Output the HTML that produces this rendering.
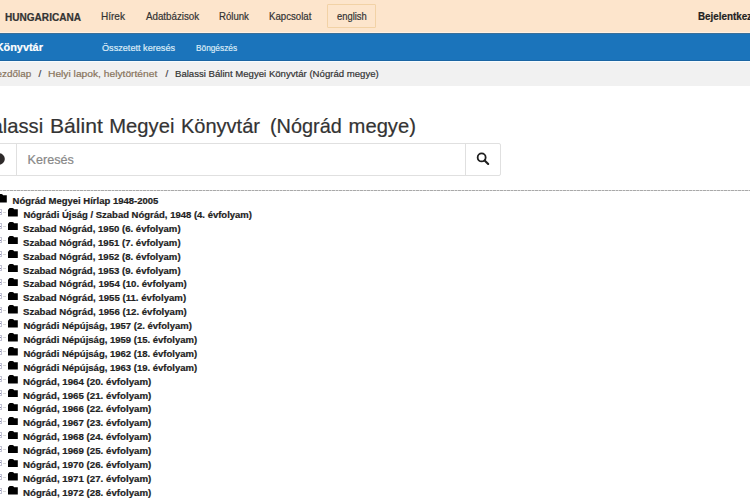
<!DOCTYPE html>
<html>
<head>
<meta charset="utf-8">
<style>
html,body{margin:0;padding:0;}
body{width:750px;height:500px;overflow:hidden;position:relative;background:#fff;font-family:"Liberation Sans",sans-serif;color:#333;}
.a{position:absolute;white-space:nowrap;line-height:1;transform-origin:0 0;-webkit-text-stroke:0.2px currentColor;}
#hdr{position:absolute;left:0;top:0;width:750px;height:33px;background:#fde5cc;}
#blue{position:absolute;left:0;top:33px;width:750px;height:28px;background:#1b74bb;}
#crumb{position:absolute;left:0;top:61px;width:750px;height:25px;background:#f1f1f1;}
#eng{position:absolute;left:327px;top:4px;width:47px;height:22px;border:1px solid #f2d2a6;border-radius:1px;}
#search{position:absolute;left:-20px;top:143px;width:519px;height:31px;border:1px solid #e0e0e0;border-radius:0 2px 2px 0;}
#addon-div{position:absolute;left:16px;top:143px;width:1px;height:33px;background:#e0e0e0;}
#btn-div{position:absolute;left:465px;top:143px;width:1px;height:33px;background:#e0e0e0;}
#dash{position:absolute;left:0;top:190px;width:750px;height:1px;background:repeating-linear-gradient(90deg,#a9a9a9 0 2.4px,#d6d6d6 2.4px 3.5px);}
.t{position:absolute;font-size:9.5px;font-weight:bold;color:#222;-webkit-text-stroke:0.2px #222;white-space:nowrap;line-height:1;transform-origin:0 0;}
.fold{position:absolute;width:10px;height:8.5px;}
.plus{position:absolute;left:-7px;width:7px;height:4px;border:1px solid #c4c4d4;}
.plus::after{content:'';position:absolute;left:1px;right:0;top:1.5px;height:1px;background:#8a8ab0;}
.dl{position:absolute;left:3.4px;width:3px;height:1px;background:#d8d8d8;}
</style>
</head>
<body>
<div id="hdr"></div>
<div id="eng"></div>

<div id="blue"></div>

<div id="crumb"></div>
<div style="position:absolute;left:0;top:32px;width:750px;height:1px;background:#fff0e2"></div>
<div style="position:absolute;left:0;top:33px;width:750px;height:1px;background:#3a6f98"></div>
<div style="position:absolute;left:0;top:60px;width:750px;height:1px;background:#1a65a3"></div>
<div style="position:absolute;left:0;top:61px;width:750px;height:1px;background:#f6fcff"></div>
<div id="search"></div>
<div id="addon-div"></div>
<div id="btn-div"></div>
<svg style="position:absolute;left:474px;top:150px" width="18" height="18" viewBox="0 0 18 18"><circle cx="7.65" cy="7.45" r="4.0" fill="none" stroke="#1e1e1e" stroke-width="1.8"/><line x1="10.6" y1="10.4" x2="14.2" y2="14" stroke="#1e1e1e" stroke-width="2.1" stroke-linecap="round"/></svg>
<svg style="position:absolute;left:-7px;top:152.5px" width="12" height="12" viewBox="0 0 12 12"><circle cx="6" cy="6" r="5.8" fill="#2e2a2a"/></svg>

<!--TEXT-->
<div class="a" style="left:5.00px;top:12.80px;font-size:10.2px;font-weight:700;color:#333;transform:scaleX(0.9870);">HUNGARICANA</div>
<div class="a" style="left:101.05px;top:10.50px;font-size:10.5px;font-weight:400;color:#333;transform:scaleX(0.9542);">Hírek</div>
<div class="a" style="left:146.00px;top:10.50px;font-size:10.5px;font-weight:400;color:#333;transform:scaleX(0.9298);">Adatbázisok</div>
<div class="a" style="left:218.68px;top:10.50px;font-size:10.5px;font-weight:400;color:#333;transform:scaleX(0.9156);">Rólunk</div>
<div class="a" style="left:268.58px;top:10.50px;font-size:10.5px;font-weight:400;color:#333;transform:scaleX(0.9178);">Kapcsolat</div>
<div class="a" style="left:336.50px;top:10.50px;font-size:10.5px;font-weight:400;color:#333;transform:scaleX(0.8939);">english</div>
<div class="a" style="left:698.00px;top:10.50px;font-size:10.5px;font-weight:700;color:#222;transform:scaleX(0.935);">Bejelentkezés</div>
<div class="a" style="left:-4.30px;top:42.40px;font-size:10.9px;font-weight:700;color:#fff;">Könyvtár</div>
<div class="a" style="left:101.70px;top:42.80px;font-size:9.4px;font-weight:400;color:#dcebf7;transform:scaleX(0.9733);">Összetett keresés</div>
<div class="a" style="left:196.20px;top:42.80px;font-size:9.4px;font-weight:400;color:#dcebf7;transform:scaleX(0.8848);">Böngészés</div>
<div class="a" style="left:-10.00px;top:68.80px;font-size:9.9px;font-weight:400;color:#87735b;">Kezdőlap</div>
<div class="a" style="left:38.50px;top:68.80px;font-size:9.9px;font-weight:400;color:#444;">/</div>
<div class="a" style="left:48.40px;top:68.80px;font-size:9.9px;font-weight:400;color:#87735b;transform:scaleX(1.0368);">Helyi lapok, helytörténet</div>
<div class="a" style="left:165.50px;top:68.80px;font-size:9.9px;font-weight:400;color:#444;">/</div>
<div class="a" style="left:175.30px;top:68.80px;font-size:9.9px;font-weight:400;color:#333;transform:scaleX(0.9718);">Balassi Bálint Megyei Könyvtár (Nógrád megye)</div>
<div class="a" style="left:27.60px;top:154.00px;font-size:12.6px;font-weight:400;color:#888;">Keresés</div>
<div class="a" style="left:-21.90px;top:115.70px;font-size:20.2px;font-weight:400;color:#333;">Balassi</div>
<div class="a" style="left:50.15px;top:115.70px;font-size:20.2px;font-weight:400;color:#333;transform:scaleX(1.0460);">Bálint</div>
<div class="a" style="left:109.30px;top:115.70px;font-size:20.2px;font-weight:400;color:#333;">Megyei</div>
<div class="a" style="left:181.41px;top:115.70px;font-size:20.2px;font-weight:400;color:#333;transform:scaleX(0.9911);">Könyvtár</div>
<div class="a" style="left:270.42px;top:115.70px;font-size:20.2px;font-weight:400;color:#333;transform:scaleX(0.9845);">(Nógrád</div>
<div class="a" style="left:348.60px;top:115.70px;font-size:20.2px;font-weight:400;color:#333;">megye)</div>
<!--/TEXT-->
<div id="dash"></div>
<!--TREE-->
<svg class="fold" style="left:-2.6px;top:194.4px" width="10" height="8.5" viewBox="0 0 10 8" preserveAspectRatio="none"><path d="M0 8V1.7Q0 1.1 0.7 1.1Q0.9 0 2.3 0H4.2Q5.5 0 6.1 1.1H9.8V8Z" fill="#000"/></svg>
<div class="t" style="left:12.6px;top:196.0px">Nógrád Megyei Hírlap 1948-2005</div>
<div class="plus" style="top:209.40px"></div><div class="dl" style="top:212.20px"></div>
<svg class="fold" style="left:8px;top:208.00px" width="10" height="8.5" viewBox="0 0 10 8" preserveAspectRatio="none"><path d="M0 8V1.7Q0 1.1 0.7 1.1Q0.9 0 2.3 0H4.2Q5.5 0 6.1 1.1H9.8V8Z" fill="#000"/></svg>
<div class="t" style="left:23.4px;top:210.00px;">Nógrádi Újság / Szabad Nógrád, 1948 (4. évfolyam)</div>
<div class="plus" style="top:223.32px"></div><div class="dl" style="top:226.12px"></div>
<svg class="fold" style="left:8px;top:221.92px" width="10" height="8.5" viewBox="0 0 10 8" preserveAspectRatio="none"><path d="M0 8V1.7Q0 1.1 0.7 1.1Q0.9 0 2.3 0H4.2Q5.5 0 6.1 1.1H9.8V8Z" fill="#000"/></svg>
<div class="t" style="left:23.4px;top:223.89px;transform:scaleX(1.0083);">Szabad Nógrád, 1950 (6. évfolyam)</div>
<div class="plus" style="top:237.24px"></div><div class="dl" style="top:240.04px"></div>
<svg class="fold" style="left:8px;top:235.84px" width="10" height="8.5" viewBox="0 0 10 8" preserveAspectRatio="none"><path d="M0 8V1.7Q0 1.1 0.7 1.1Q0.9 0 2.3 0H4.2Q5.5 0 6.1 1.1H9.8V8Z" fill="#000"/></svg>
<div class="t" style="left:23.4px;top:237.78px;transform:scaleX(1.0083);">Szabad Nógrád, 1951 (7. évfolyam)</div>
<div class="plus" style="top:251.16px"></div><div class="dl" style="top:253.96px"></div>
<svg class="fold" style="left:8px;top:249.76px" width="10" height="8.5" viewBox="0 0 10 8" preserveAspectRatio="none"><path d="M0 8V1.7Q0 1.1 0.7 1.1Q0.9 0 2.3 0H4.2Q5.5 0 6.1 1.1H9.8V8Z" fill="#000"/></svg>
<div class="t" style="left:23.4px;top:251.67px;transform:scaleX(1.0083);">Szabad Nógrád, 1952 (8. évfolyam)</div>
<div class="plus" style="top:265.08px"></div><div class="dl" style="top:267.88px"></div>
<svg class="fold" style="left:8px;top:263.68px" width="10" height="8.5" viewBox="0 0 10 8" preserveAspectRatio="none"><path d="M0 8V1.7Q0 1.1 0.7 1.1Q0.9 0 2.3 0H4.2Q5.5 0 6.1 1.1H9.8V8Z" fill="#000"/></svg>
<div class="t" style="left:23.4px;top:265.56px;transform:scaleX(1.0083);">Szabad Nógrád, 1953 (9. évfolyam)</div>
<div class="plus" style="top:279.00px"></div><div class="dl" style="top:281.80px"></div>
<svg class="fold" style="left:8px;top:277.60px" width="10" height="8.5" viewBox="0 0 10 8" preserveAspectRatio="none"><path d="M0 8V1.7Q0 1.1 0.7 1.1Q0.9 0 2.3 0H4.2Q5.5 0 6.1 1.1H9.8V8Z" fill="#000"/></svg>
<div class="t" style="left:23.4px;top:279.45px;transform:scaleX(1.013);">Szabad Nógrád, 1954 (10. évfolyam)</div>
<div class="plus" style="top:292.92px"></div><div class="dl" style="top:295.72px"></div>
<svg class="fold" style="left:8px;top:291.52px" width="10" height="8.5" viewBox="0 0 10 8" preserveAspectRatio="none"><path d="M0 8V1.7Q0 1.1 0.7 1.1Q0.9 0 2.3 0H4.2Q5.5 0 6.1 1.1H9.8V8Z" fill="#000"/></svg>
<div class="t" style="left:23.4px;top:293.34px;transform:scaleX(1.013);">Szabad Nógrád, 1955 (11. évfolyam)</div>
<div class="plus" style="top:306.84px"></div><div class="dl" style="top:309.64px"></div>
<svg class="fold" style="left:8px;top:305.44px" width="10" height="8.5" viewBox="0 0 10 8" preserveAspectRatio="none"><path d="M0 8V1.7Q0 1.1 0.7 1.1Q0.9 0 2.3 0H4.2Q5.5 0 6.1 1.1H9.8V8Z" fill="#000"/></svg>
<div class="t" style="left:23.4px;top:307.23px;transform:scaleX(1.013);">Szabad Nógrád, 1956 (12. évfolyam)</div>
<div class="plus" style="top:320.76px"></div><div class="dl" style="top:323.56px"></div>
<svg class="fold" style="left:8px;top:319.36px" width="10" height="8.5" viewBox="0 0 10 8" preserveAspectRatio="none"><path d="M0 8V1.7Q0 1.1 0.7 1.1Q0.9 0 2.3 0H4.2Q5.5 0 6.1 1.1H9.8V8Z" fill="#000"/></svg>
<div class="t" style="left:23.4px;top:321.12px;">Nógrádi Népújság, 1957 (2. évfolyam)</div>
<div class="plus" style="top:334.68px"></div><div class="dl" style="top:337.48px"></div>
<svg class="fold" style="left:8px;top:333.28px" width="10" height="8.5" viewBox="0 0 10 8" preserveAspectRatio="none"><path d="M0 8V1.7Q0 1.1 0.7 1.1Q0.9 0 2.3 0H4.2Q5.5 0 6.1 1.1H9.8V8Z" fill="#000"/></svg>
<div class="t" style="left:23.4px;top:335.01px;">Nógrádi Népújság, 1959 (15. évfolyam)</div>
<div class="plus" style="top:348.60px"></div><div class="dl" style="top:351.40px"></div>
<svg class="fold" style="left:8px;top:347.20px" width="10" height="8.5" viewBox="0 0 10 8" preserveAspectRatio="none"><path d="M0 8V1.7Q0 1.1 0.7 1.1Q0.9 0 2.3 0H4.2Q5.5 0 6.1 1.1H9.8V8Z" fill="#000"/></svg>
<div class="t" style="left:23.4px;top:348.90px;">Nógrádi Népújság, 1962 (18. évfolyam)</div>
<div class="plus" style="top:362.52px"></div><div class="dl" style="top:365.32px"></div>
<svg class="fold" style="left:8px;top:361.12px" width="10" height="8.5" viewBox="0 0 10 8" preserveAspectRatio="none"><path d="M0 8V1.7Q0 1.1 0.7 1.1Q0.9 0 2.3 0H4.2Q5.5 0 6.1 1.1H9.8V8Z" fill="#000"/></svg>
<div class="t" style="left:23.4px;top:362.79px;">Nógrádi Népújság, 1963 (19. évfolyam)</div>
<div class="plus" style="top:376.44px"></div><div class="dl" style="top:379.24px"></div>
<svg class="fold" style="left:8px;top:375.04px" width="10" height="8.5" viewBox="0 0 10 8" preserveAspectRatio="none"><path d="M0 8V1.7Q0 1.1 0.7 1.1Q0.9 0 2.3 0H4.2Q5.5 0 6.1 1.1H9.8V8Z" fill="#000"/></svg>
<div class="t" style="left:23.4px;top:376.68px;transform:scaleX(1.0207);">Nógrád, 1964 (20. évfolyam)</div>
<div class="plus" style="top:390.36px"></div><div class="dl" style="top:393.16px"></div>
<svg class="fold" style="left:8px;top:388.96px" width="10" height="8.5" viewBox="0 0 10 8" preserveAspectRatio="none"><path d="M0 8V1.7Q0 1.1 0.7 1.1Q0.9 0 2.3 0H4.2Q5.5 0 6.1 1.1H9.8V8Z" fill="#000"/></svg>
<div class="t" style="left:23.4px;top:390.57px;transform:scaleX(1.0207);">Nógrád, 1965 (21. évfolyam)</div>
<div class="plus" style="top:404.28px"></div><div class="dl" style="top:407.08px"></div>
<svg class="fold" style="left:8px;top:402.88px" width="10" height="8.5" viewBox="0 0 10 8" preserveAspectRatio="none"><path d="M0 8V1.7Q0 1.1 0.7 1.1Q0.9 0 2.3 0H4.2Q5.5 0 6.1 1.1H9.8V8Z" fill="#000"/></svg>
<div class="t" style="left:23.4px;top:404.46px;transform:scaleX(1.0207);">Nógrád, 1966 (22. évfolyam)</div>
<div class="plus" style="top:418.20px"></div><div class="dl" style="top:421.00px"></div>
<svg class="fold" style="left:8px;top:416.80px" width="10" height="8.5" viewBox="0 0 10 8" preserveAspectRatio="none"><path d="M0 8V1.7Q0 1.1 0.7 1.1Q0.9 0 2.3 0H4.2Q5.5 0 6.1 1.1H9.8V8Z" fill="#000"/></svg>
<div class="t" style="left:23.4px;top:418.35px;transform:scaleX(1.0207);">Nógrád, 1967 (23. évfolyam)</div>
<div class="plus" style="top:432.12px"></div><div class="dl" style="top:434.92px"></div>
<svg class="fold" style="left:8px;top:430.72px" width="10" height="8.5" viewBox="0 0 10 8" preserveAspectRatio="none"><path d="M0 8V1.7Q0 1.1 0.7 1.1Q0.9 0 2.3 0H4.2Q5.5 0 6.1 1.1H9.8V8Z" fill="#000"/></svg>
<div class="t" style="left:23.4px;top:432.24px;transform:scaleX(1.0207);">Nógrád, 1968 (24. évfolyam)</div>
<div class="plus" style="top:446.04px"></div><div class="dl" style="top:448.84px"></div>
<svg class="fold" style="left:8px;top:444.64px" width="10" height="8.5" viewBox="0 0 10 8" preserveAspectRatio="none"><path d="M0 8V1.7Q0 1.1 0.7 1.1Q0.9 0 2.3 0H4.2Q5.5 0 6.1 1.1H9.8V8Z" fill="#000"/></svg>
<div class="t" style="left:23.4px;top:446.13px;transform:scaleX(1.0207);">Nógrád, 1969 (25. évfolyam)</div>
<div class="plus" style="top:459.96px"></div><div class="dl" style="top:462.76px"></div>
<svg class="fold" style="left:8px;top:458.56px" width="10" height="8.5" viewBox="0 0 10 8" preserveAspectRatio="none"><path d="M0 8V1.7Q0 1.1 0.7 1.1Q0.9 0 2.3 0H4.2Q5.5 0 6.1 1.1H9.8V8Z" fill="#000"/></svg>
<div class="t" style="left:23.4px;top:460.02px;transform:scaleX(1.0207);">Nógrád, 1970 (26. évfolyam)</div>
<div class="plus" style="top:473.88px"></div><div class="dl" style="top:476.68px"></div>
<svg class="fold" style="left:8px;top:472.48px" width="10" height="8.5" viewBox="0 0 10 8" preserveAspectRatio="none"><path d="M0 8V1.7Q0 1.1 0.7 1.1Q0.9 0 2.3 0H4.2Q5.5 0 6.1 1.1H9.8V8Z" fill="#000"/></svg>
<div class="t" style="left:23.4px;top:473.91px;transform:scaleX(1.0207);">Nógrád, 1971 (27. évfolyam)</div>
<div class="plus" style="top:487.80px"></div><div class="dl" style="top:490.60px"></div>
<svg class="fold" style="left:8px;top:486.40px" width="10" height="8.5" viewBox="0 0 10 8" preserveAspectRatio="none"><path d="M0 8V1.7Q0 1.1 0.7 1.1Q0.9 0 2.3 0H4.2Q5.5 0 6.1 1.1H9.8V8Z" fill="#000"/></svg>
<div class="t" style="left:23.4px;top:487.80px;transform:scaleX(1.0207);">Nógrád, 1972 (28. évfolyam)</div>
<!--/TREE-->
</body>
</html>
